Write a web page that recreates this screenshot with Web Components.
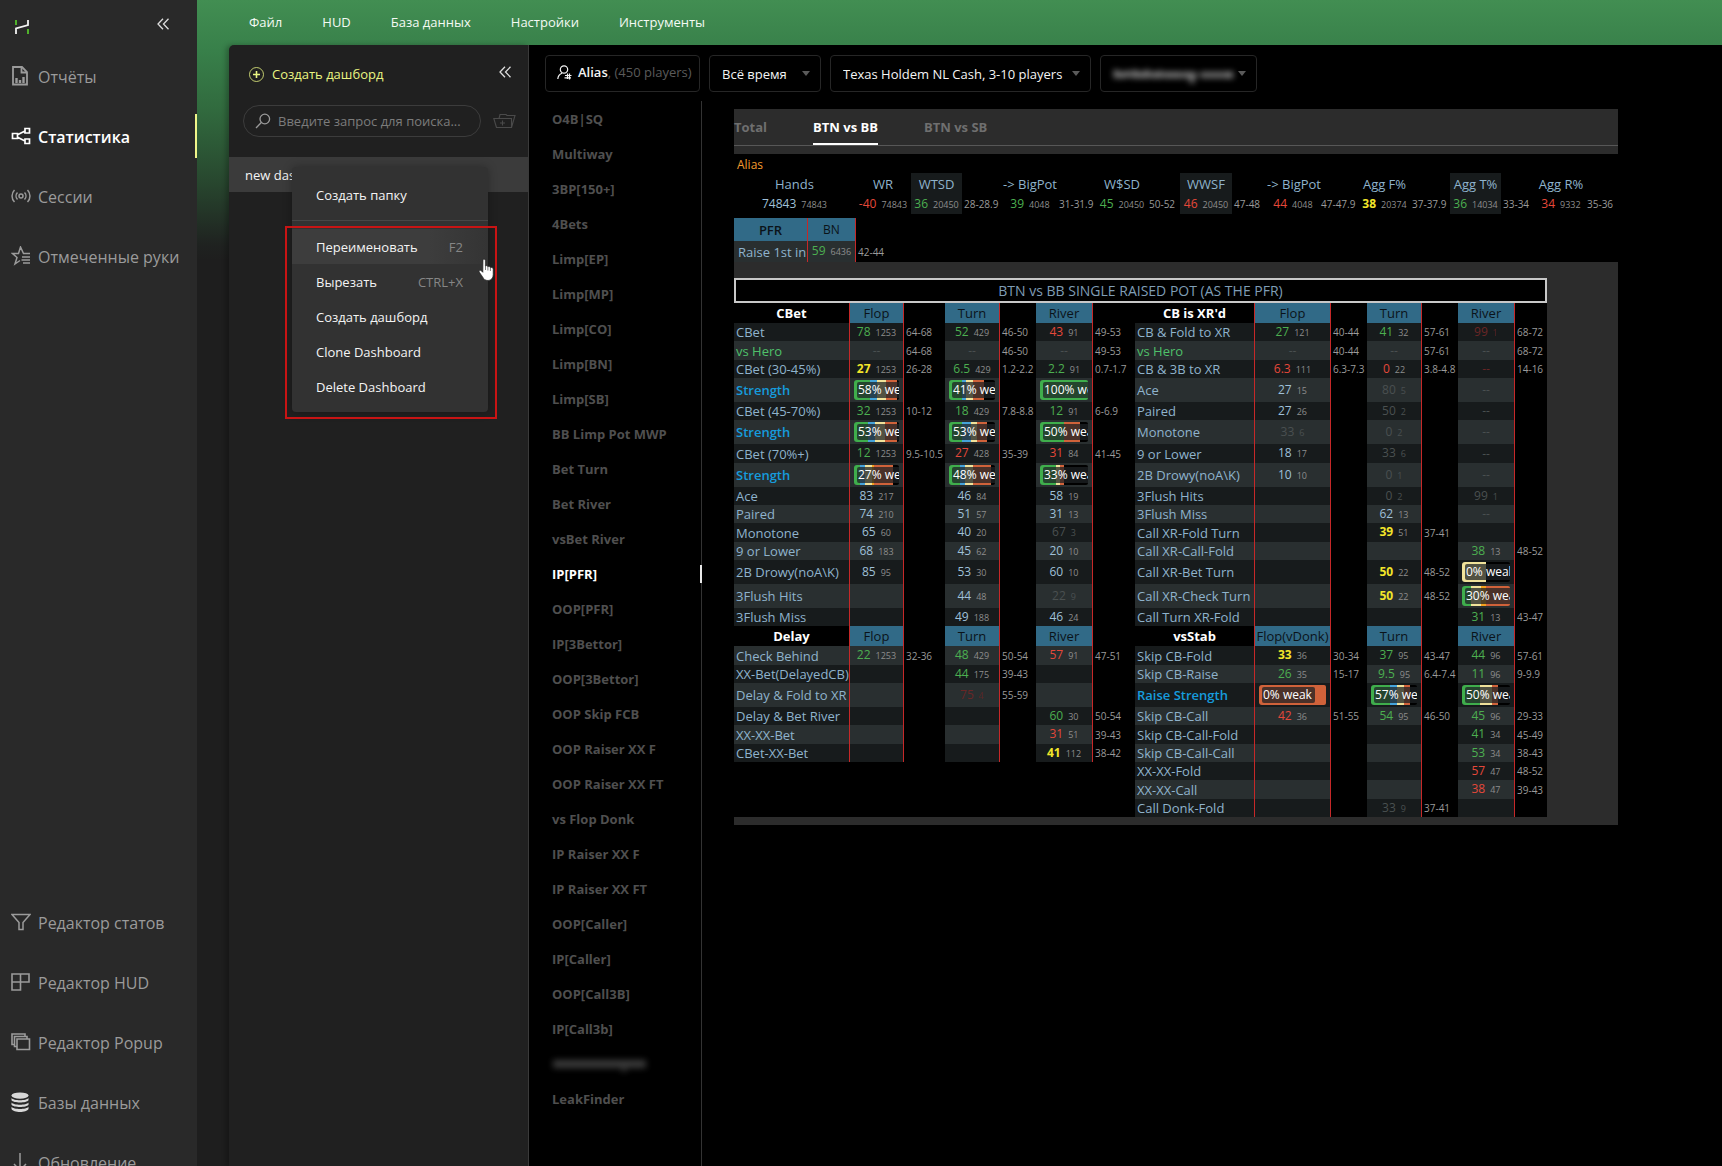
<!DOCTYPE html>
<html lang="ru">
<head>
<meta charset="utf-8">
<title>Статистика</title>
<style>
html,body{margin:0;height:100%;background:#000;overflow:hidden}
body{font-family:"Open Sans","Noto Sans",sans-serif;font-size:13px;color:#eee}
</style>
</head>
<body>
<hm-app></hm-app>
<script>
const base = `*{box-sizing:border-box}
button,input,select{font:inherit;color:inherit;background:none;border:0;padding:0;margin:0;text-align:left}
a{color:inherit;text-decoration:none}svg{display:block;flex:none}`;
const define = (name, html) => customElements.define(name, class extends HTMLElement {
  connectedCallback() {
    if (this.shadowRoot) return;
    const root = this.attachShadow({ mode: 'open' });
    root.innerHTML = `<style>${base}</style>` + (typeof html === 'function' ? html(this) : html);
  }
});
const svg = (w, h, body, attrs = '') => `<svg width="${w}" height="${h}" viewBox="0 0 ${w} ${h}" fill="none" stroke="currentColor" ${attrs}>${body}</svg>`;
const chevrons = svg(12, 12, '<path d="M6 .8 1 6l5 5.2M11.5.8l-5 5.2 5 5.2"/>', 'stroke-width="1.3"');
const icons = {
  report: svg(18, 20, '<path d="M2 1h9l5 5v12.500H2z"/><path d="M10.500 1v5.500H16"/><path d="M5.500 17v-5M9 17v-3M12.500 17v-6" stroke-width="2.400"/>', 'stroke-width="1.8"'),
  share: svg(20, 18, '<path d="M1.500 6.500h5v5h-5zM14 1.500h4.500V6H14zM14 12h4.500v4.500H14zM6.500 7.800 14 4M6.500 10.200 14 14"/>', 'stroke-width="1.7"'),
  live: svg(20, 14, '<circle cx="10" cy="7" r="2"/><path d="M6.500 3.500a5 5 0 0 0 0 7M13.500 3.500a5 5 0 0 1 0 7M3.500 1a8.500 8.500 0 0 0 0 12M16.500 1a8.500 8.500 0 0 1 0 12"/>', 'stroke-width="1.5"'),
  star: svg(20, 20, '<path d="M19 7.500h-6.500L9.500 1 7.500 7.500H1.500l4.500 4-2 6.500 5-3.500M11 11h8M10.500 14h8.500M12 17h7"/>', 'stroke-width="1.5"'),
  funnel: svg(20, 18, '<path d="M1 1.500h18L12 9.500v7H8v-7z"/>', 'stroke-width="1.5"'),
  grid: svg(20, 18, '<path d="M1 1h8.500v16H1zM1 9h17V1H9.500"/>', 'stroke-width="1.6"'),
  stack: svg(20, 18, '<path d="M6 6h12.500v10.500H6z"/><path d="M6 13.500H3.500V3.500H16V6M3.500 11.500H1V1h13v2.500"/>', 'stroke-width="1.6"'),
  db: svg(18, 21, '<ellipse cx="9" cy="3.600" rx="8.500" ry="3.200"/><path d="M.5 6c2 3 15 3 17 0v2.300c-2 3-15 3-17 0zM.5 10.400c2 3 15 3 17 0v2.300c-2 3-15 3-17 0zM.5 14.800c2 3 15 3 17 0v2.300c-2 4-15 4-17 0z"/>', 'style="fill:#d8d8d8;stroke:none"'),
  down: svg(18, 20, '<path d="M9 1v17M3 12l6 6.300 6-6.300"/>', 'stroke-width="1.5"')
};

define('hm-nav-item', el => `<style>
:host{display:block;position:relative;color:#9b9b9b;font-size:16px}
:host([active]){color:#fff;font-weight:600}
:host([active])::after{content:"";position:absolute;right:0;top:7px;height:44px;width:2px;background:#f0f58a}
a{display:flex;align-items:center;height:60px;padding-left:11px}
.i{width:27px;display:flex;align-items:center;padding-bottom:2px}
</style><a href="#"><span class="i">${icons[el.getAttribute('icon')]}</span><slot></slot></a>`);

define('hm-sidebar', `<style>
:host{display:block;flex:none;width:197px;height:100vh;overflow:hidden;background:#292929}
.in{display:flex;flex-direction:column;height:calc(100vh + 27px)}
.top{display:flex;justify-content:space-between;align-items:center;height:47px;padding:6px 28px 0 15px}
.top button{color:#ddd;margin-top:-5px}
.end{margin-top:auto}
</style><div class="in"><div class="top">
${svg(14, 14, '<path d="M1 0v5M13 14V9" stroke="#54c02c"/><path d="M1 14V8.500L13 5V0" stroke="#f2f2f2"/>', 'stroke-width="1.8"')}
<button aria-label="Свернуть меню">${chevrons}</button></div>
<nav>
<hm-nav-item icon="report">Отчёты</hm-nav-item>
<hm-nav-item icon="share" active>Статистика</hm-nav-item>
<hm-nav-item icon="live">Сессии</hm-nav-item>
<hm-nav-item icon="star">Отмеченные руки</hm-nav-item>
</nav>
<nav class="end">
<hm-nav-item icon="funnel">Редактор статов</hm-nav-item>
<hm-nav-item icon="grid">Редактор HUD</hm-nav-item>
<hm-nav-item icon="stack">Редактор Popup</hm-nav-item>
<hm-nav-item icon="db">Базы данных</hm-nav-item>
<hm-nav-item icon="down">Обновление</hm-nav-item>
</nav></div>`);

define('hm-menubar', `<style>
:host{display:block;flex:none}
nav{display:flex;align-items:center;gap:40px;height:45px;padding:0 0 2px 52px;font-weight:500;font-size:13px;color:#f4faf4}
</style><nav><a href="#">Файл</a><a href="#">HUD</a><a href="#">База данных</a><a href="#">Настройки</a><a href="#">Инструменты</a></nav>`);

define('hm-context-menu', `<style>
:host{display:block;width:196px;background:#323232;border-radius:4px;box-shadow:0 0 10px rgba(0,0,0,.3);font-weight:500;padding:8px 0 8px}
button{display:flex;justify-content:space-between;align-items:center;width:100%;height:35px;padding:0 25px 0 24px;color:#f4f4f4;white-space:nowrap}
button.first{height:39px}
kbd{font:inherit;font-weight:400;color:#868686}
hr{border:0;border-top:1px solid #474747;margin:6px 0 8px}
.on{background:linear-gradient(90deg,#3d3d3d 70%,#343434)}
.mark{position:absolute;left:-7px;top:59px;width:212px;height:193px;border:2px solid #c81414}
.cur{position:absolute;left:186px;top:91px}
</style><div role="menu">
<button role="menuitem" class="first">Создать папку</button><hr>
<button role="menuitem" class="on">Переименовать<kbd>F2</kbd></button>
<button role="menuitem">Вырезать<kbd>CTRL+X</kbd></button>
<button role="menuitem">Создать дашборд</button>
<button role="menuitem">Clone Dashboard</button>
<button role="menuitem">Delete Dashboard</button></div>
<div class="mark"></div>
<svg class="cur" width="17" height="24" viewBox="0 0 17 24"><path d="M5 1.500c1.300-.8 2.400 0 2.400 1.300V8c.8-.7 2.200-.4 2.500.8.900-.7 2.200-.3 2.500.9 1.200-.6 2.800 0 2.800 1.500v5.300c0 3.500-2 6-5.200 6-2.800 0-4.200-1.300-5.400-3.600L1.200 14c-.5-1.300.9-2.200 2-1.300l1.600 1.600z" fill="#fff" stroke="#222" stroke-width=".7"/><path d="M7.500 8v4M9.900 9v3.500M12.400 10v3" stroke="#444" stroke-width=".7"/></svg>`);

define('hm-dashboards', `<style>
:host{display:block;position:relative;flex:none;width:300px;background:#202020;border-right:1px solid #3a3a3a;border-radius:5px 0 0 0;box-shadow:-3px 0 5px rgba(0,0,0,.25)}
.head{display:flex;justify-content:space-between;align-items:center;height:60px;padding:0 17px 2px 20px}
.new{display:flex;align-items:center;gap:8px;color:#eaf582;font-weight:500}
.col{color:#ddd;margin-top:-5px}
.find{display:flex;align-items:center;gap:12px;padding:0 12px 0 14px}
label{display:flex;align-items:center;gap:7px;flex:1;height:32px;border:1px solid #3c3c3c;border-radius:16px;padding:0 4px 0 11px;color:#9a9a9a}
input{width:100%;min-width:0;outline:0;font-size:13px}
input::placeholder{color:#7c7c7c;opacity:1}
.find button{color:#4a4a4a}
.row{display:flex;align-items:center;height:35px;margin-top:20px;padding-left:16px;background:#3b3b3b;color:#f4f4f4;font-weight:500;font-size:13px}
hm-context-menu{position:absolute;left:63px;top:122px}
</style>
<div class="head"><button class="new">${svg(15, 15, '<circle cx="7.500" cy="7.500" r="7" stroke-width=".8"/><path d="M7.500 4v7M4 7.500h7" stroke-width="1.6"/>')}Создать дашборд</button>
<button class="col" aria-label="Свернуть">${chevrons}</button></div>
<div class="find"><label>${svg(16, 16, '<circle cx="9.800" cy="6" r="4.800"/><path d="M6.300 9.500 1 15"/>', 'stroke-width="1.3"')}<input type="text" aria-label="Поиск" placeholder="Введите запрос для поиска..."></label>
<button aria-label="Новая папка">${svg(23, 16, '<path d="M3.500 14.500.8 5.500h17.700v9zM6 5.500 7 1.500h6l1 1h8L18.500 14.500M9.500 7.500v5M7 10h5"/>', 'stroke-width="1.1"')}</button></div>
<div class="row">new das</div>
<hm-context-menu></hm-context-menu>`);

const arrow = svg(8, 5, '<path d="M0 0h8L4 5z"/>', 'style="fill:#5a5a5a;stroke:none"');
define('hm-filters', `<style>
:host{display:flex;gap:9px;padding:10px 16px 9px;font-size:13px;font-weight:500}
.box{display:flex;align-items:center;justify-content:space-between;height:37px;border:1px solid #262626;border-radius:4px;padding:0 10px 0 12px;color:#f4f4f4;white-space:nowrap}
.who{width:155px;justify-content:flex-start;gap:6px;padding:0 8px 3px 11px}
.who b{font-weight:600}
.who i{font-style:normal;font-weight:400;color:#5a5a5a}
.time{width:112px}.game{width:261px}.acc{width:157px}
select{appearance:none;outline:0;flex:1;min-width:0}
</style>
<button class="box who">${svg(15, 15, '<circle cx="7" cy="4.500" r="3.700"/><path d="M.8 14c.3-3.500 2-5 4.200-5.800M8 10.500h6.500M7.500 12.800H14M10.500 8.500v5.500M12.500 8.500v6"/>', 'stroke-width="1.2"')}<span><b>Alias</b><i>, (450 players)</i></span></button>
<div class="box time"><select aria-label="Период"><option>Всё время</option></select>${arrow}</div>
<div class="box game"><select aria-label="Игра"><option>Texas Holdem NL Cash, 3-10 players</option></select>${arrow}</div>
<button class="box acc" aria-label="Аккаунт">${svg(122, 20, '<path d="M3 6v8M9 8v6M15 7v6M22 6v8M28 8v6M34 6v8M41 8v6M47 7v7M54 8v6M60 8v6M66 8v6M73 8v6M79 8v11M92 8v6M99 8v6M106 8v6M113 8v6M118 8v6" stroke-width="4"/><path d="M2 11h118" stroke-width="4" opacity=".5"/>', 'style="filter:blur(3px);opacity:.65"')}${arrow}</button>`);

const cats = ['O4B|SQ','Multiway','3BP[150+]','4Bets','Limp[EP]','Limp[MP]','Limp[CO]','Limp[BN]','Limp[SB]','BB Limp Pot MWP','Bet Turn','Bet River','vsBet River','IP[PFR]','OOP[PFR]','IP[3Bettor]','OOP[3Bettor]','OOP Skip FCB','OOP Raiser XX F','OOP Raiser XX FT','vs Flop Donk','IP Raiser XX F','IP Raiser XX FT','OOP[Caller]','IP[Caller]','OOP[Call3B]','IP[Call3b]','','LeakFinder'];
define('hm-categories', `<style>
:host{display:block;flex:none;width:173px;border-right:1px solid #333;font-weight:700;font-size:13px;color:#4f4f4f}
a{display:flex;align-items:center;height:35px;padding-left:23px;position:relative}
.on{color:#fff}.on::after{content:"";position:absolute;right:-1px;top:9px;width:2px;height:18px;background:#e8e8e8}
</style><nav>${cats.map(c => `<a href="#"${c === 'IP[PFR]' ? ' class="on"' : ''}${c ? '' : ' aria-label="Дашборд"'}>${c || svg(96, 16, '<path d="M1 8h93" stroke-width="8"/><path d="M72 8v8" stroke-width="4"/>', 'style="filter:blur(3px);opacity:.75"')}</a>`).join('')}</nav>`);

/* Cell notation: colour letter + value + sample; "#text|stops" draws a strength bar. */
const cell = s => {
  if (s[0] === '#') {
    const [t, stops] = s.slice(1).split('|');
    const col = { g: '#3fae4c', b: '#45a3d9', y: '#f0e29a', o: '#d0623a', a: '#f2a01e', k: '#000' };
    let p = 0;
    const g = stops.split(',').map(x => { const a = p; p = +x.slice(1); return `${col[x[0]]} ${a}% ${p}%`; }).join(',');
    return `<div class="bar" style="background:linear-gradient(90deg,${g})"><span>${t}</span></div>`;
  }
  if (!s) return '';
  const [v, n] = s.slice(1).split(' ');
  return `<span class="v ${s[0]}">${v}${n ? `<small>${n}</small>` : ''}</span>`;
};
const tableCss = `table{border-collapse:separate;border-spacing:0;table-layout:fixed;background:#000}
td,th{padding:0;font-weight:400;text-align:center;white-space:nowrap;line-height:16px;font-size:12px}
.v{color:#9fc0d8;font-size:12px}.v small{font-size:9px;color:#8d8d8d;margin-left:5px}
.g{color:#4caf50}.r{color:#e5483a}.y{color:#f2e52a;font-weight:700}.y small{font-weight:400}
.d,.d small{color:#4a5050}.x,.x small{color:#6a2626}.x small{opacity:.8}
.rg{text-align:left;padding-left:2px;font-size:10px;color:#9a9a9a}
.l{border-left:1px solid #c62828}.e{border-right:1px solid #c62828}
.lab{text-align:left;padding-left:2px;color:#8fb3cc;font-size:13px}
.dk{background:#171b1c}.lt{background:#292f30}
.blue{background:#316a87;color:#0b1319;font-size:13px}`;

const top18 = [121,56,51,41,54,40,50,33,52,35,52,40,51,40,51,36,48,33];
const topH = ['Hands','WR','WTSD','','-> BigPot','','W$SD','','WWSF','','-> BigPot','','Agg F%','','Agg T%','','Agg R%',''];
const topV = ['v74843 74843','r-40 74843','g36 20450','28-28.9','g39 4048','31-31.9','g45 20450','50-52','r46 20450','47-48','r44 4048','47-47.9','y38 20374','37-37.9','g36 14034','33-34','r34 9332','35-36'];
const isR = i => i > 2 && i % 2 === 1;
const shade = i => [2, 8, 14].includes(i) ? 'dk' : '';
define('hm-summary', `<style>${tableCss}
:host{display:block;background:#000;height:108px}
.name{color:#f29a2e;font-size:12px;line-height:19px;height:19px;padding:1px 3px 0}
.sum th{color:#8fb3cc;font-size:13px}
.pfr{margin-top:4px}.pfr .first{font-weight:600}.pfr .lab{padding-left:4px}
</style><div class="name">Alias</div>
<table class="sum" style="width:884px"><colgroup>${top18.map(w => `<col style="width:${w}px">`).join('')}</colgroup>
<tr style="height:21px">${topH.map((h, i) => `<th class="${shade(i)}">${h.replace('>', '&gt;')}</th>`).join('')}</tr>
<tr style="height:20px">${topV.map((v, i) => isR(i) ? `<td class="rg">${v}</td>` : `<td class="${shade(i)}">${cell(v)}</td>`).join('')}</tr></table>
<table class="pfr" style="width:164px"><colgroup><col style="width:74px"><col style="width:48px"><col></colgroup>
<tr style="height:23px"><th class="blue e first">PFR</th><th class="blue e" style="font-size:12px">BN</th><td></td></tr>
<tr style="height:21px"><td class="lt lab e">Raise 1st in</td><td class="lt e">${cell('g59 6436')}</td><td class="rg">42-44</td></tr></table>`);

const H = (t, a = 'Flop') => ['H' + t, a, '', 'Turn', '', 'River', ''];
const rows = [
[20, H('CBet'), H("CB is XR'd")],
[18, ['kCBet','g78 1253','64-68','g52 429','46-50','r43 91','49-53'], ['kCB & Fold to XR','g27 121','40-44','g41 32','57-61','x99 1','68-72']],
[19, ['gvs Hero','d--','64-68','d--','46-50','d--','49-53'], ['gvs Hero','d--','40-44','d--','57-61','d--','68-72']],
[18, ['kCBet (30-45%)','y27 1253','26-28','g6.5 429','1.2-2.2','g2.2 91','0.7-1.7'], ['kCB & 3B to XR','r6.3 111','6.3-7.3','r0 22','3.8-4.8','x--','14-16']],
[24, ['sStrength','#58% we|g36,b51,y72,o95,k100','','#41% wea|g29,b36,y53,o77,k100','','#100% we|g100',''], ['kAce','v27 15','','d80 5','','d--','']],
[18, ['kCBet (45-70%)','g32 1253','10-12','g18 429','7.8-8.8','g12 91','6-6.9'], ['kPaired','v27 26','','d50 2','','d--','']],
[24, ['sStrength','#53% we|g32,b47,y69,o96,k100','','#53% wea|g29,b47,y61,o83,k100','','#50% wea|g50,o83,k100',''], ['kMonotone','d33 6','','d0 2','','d--','']],
[19, ['kCBet (70%+)','g12 1253','9.5-10.5','r27 428','35-39','r31 84','41-45'], ['k9 or Lower','v18 17','','d33 6','','d--','']],
[24, ['sStrength','#27% we|g13,b25,y40,a45,o87,k100','','#48% wea|g24,b35,y53,o92,k100','','#33% wea|g33,y42,o50,k100',''], ['k2B Drowy(noA\\K)','v10 10','','d0 1','','d--','']],
[18, ['kAce','v83 217','','v46 84','','v58 19',''], ['k3Flush Hits','','','d0 2','','d99 1','']],
[18, ['kPaired','v74 210','','v51 57','','v31 13',''], ['k3Flush Miss','','','v62 13','','d--','']],
[19, ['kMonotone','v65 60','','v40 20','','d67 3',''], ['kCall XR-Fold Turn','','','y39 51','37-41','','']],
[18, ['k9 or Lower','v68 183','','v45 62','','v20 10',''], ['kCall XR-Call-Fold','','','','','g38 13','48-52']],
[24, ['k2B Drowy(noA\\K)','v85 95','','v53 30','','v60 10',''], ['kCall XR-Bet Turn','','','y50 22','48-52','#0% weak|y50,k100','']],
[24, ['k3Flush Hits','','','v44 48','','d22 9',''], ['kCall XR-Check Turn','','','y50 22','48-52','#30% wea|g19,y39,a50,o100','']],
[18, ['k3Flush Miss','','','v49 188','','v46 24',''], ['kCall Turn XR-Fold','','','','','g31 13','43-47']],
[20, H('Delay'), H('vsStab', 'Flop(vDonk)')],
[19, ['kCheck Behind','g22 1253','32-36','g48 429','50-54','r57 91','47-51'], ['kSkip CB-Fold','y33 36','30-34','g37 95','43-47','g44 96','57-61']],
[18, ['kXX-Bet(DelayedCB)','','','g44 175','39-43','',''], ['kSkip CB-Raise','g26 35','15-17','g9.5 95','6.4-7.4','g11 96','9-9.9']],
[24, ['kDelay & Fold to XR','','','x75 4','55-59','',''], ['sRaise Strength','#0% weak|o100','','#57% we|g42,b57,y72,o85,k100','','#50% wea|g38,y63,o75,k100','']],
[18, ['kDelay & Bet River','','','','','g60 30','50-54'], ['kSkip CB-Call','r42 36','51-55','g54 95','46-50','g45 96','29-33']],
[19, ['kXX-XX-Bet','','','','','r31 51','39-43'], ['kSkip CB-Call-Fold','','','','','g41 34','45-49']],
[18, ['kCBet-XX-Bet','','','','','y41 112','38-42'], ['kSkip CB-Call-Call','','','','','g53 34','38-43']],
[18, null, ['kXX-XX-Fold','','','','','r57 47','48-52']],
[19, null, ['kXX-XX-Call','','','','','r38 47','39-43']],
[18, null, ['kCall Donk-Fold','','','d33 9','37-41','','']]
];
const half = (r, tone) => {
  if (!r) return '<td colspan="7"></td>';
  const edge = ['', 'l e', '', 'e', '', 'e', ''];
  const text = r[0].slice(1).replace('&', '&amp;');
  if (r[0][0] === 'H') return `<th class="ttl">${text}</th>` + r.slice(1).map((c, i) => c ? `<th class="blue ${edge[i + 1]}">${c}</th>` : '<td></td>').join('');
  return `<td class="lab ${tone} k${r[0][0]}">${text}</td>` + r.slice(1).map((c, i) => i % 2 ? `<td class="rg">${c}</td>` : `<td class="${tone} ${edge[i + 1]}">${cell(c)}</td>`).join('');
};
define('hm-stat-table', `<style>${tableCss}
:host{display:block;width:813px}
h2{margin:0;height:25px;border:2px solid #c8c8c8;background:#000;color:#7f9db5;font-size:14px;line-height:21px;font-weight:500;text-align:center}
.ttl{font-weight:700;color:#fff;font-size:13px}
.kg{color:#4fc06a}.ks{color:#169bdc;font-weight:600}
.bar{height:20px;margin:0 4px;border-radius:3px 2px 2px 3px;padding:2px 0 2px 3px;overflow:hidden;text-align:left}
.bar span{display:inline-block;vertical-align:top;height:16px;line-height:16px;padding:0 3px 0 1px;border-radius:2px;background:rgba(30,34,36,.75);color:#fff;font-size:12px;font-weight:500}
</style><h2>BTN vs BB SINGLE RAISED POT (AS THE PFR)</h2>
<table style="width:813px"><colgroup>${[115,55,41,55,36,57,42,119,77,36,55,36,57,32].map(w => `<col style="width:${w}px">`).join('')}</colgroup>
${rows.map(([h, a, b], i) => `<tr style="height:${h}px">${half(a, (i % 2) ^ (i > 16) ? 'dk' : 'lt')}${half(b, i % 2 ? 'dk' : 'lt')}</tr>`).join('')}</table>`);

define('hm-sheet', `<style>
:host{display:block;flex:0 1 884px;margin:8px 0 0 32px;background:#2c2c2c;align-self:flex-start;padding-bottom:8px}
nav{display:flex;gap:46px;height:37px;border-bottom:1px solid #575757;margin-bottom:8px;font-weight:700;color:#6f6f6f}
a{line-height:36px;height:36px}
.on{color:#fff;border-bottom:2px solid #fff}
hm-stat-table{margin-top:16px}
</style><nav><a href="#">Total</a><a href="#" class="on">BTN vs BB</a><a href="#">BTN vs SB</a></nav>
<hm-summary></hm-summary><hm-stat-table></hm-stat-table>`);

define('hm-app', `<style>
:host{display:flex;height:100vh;overflow:hidden}
.r{flex:1;min-width:0;display:flex;flex-direction:column;background:linear-gradient(180deg,#428e52 0,#38804a 50px,#316a3e 110px,#28482f 180px,#1f2220 245px,#1e1e1e 260px)}
.b{flex:1;display:flex;min-height:0;padding-left:32px}
main{flex:1;min-width:0;background:#000;display:flex;flex-direction:column}
.c{display:flex;flex:1;min-height:0}
</style><hm-sidebar></hm-sidebar><div class="r"><hm-menubar></hm-menubar><div class="b"><hm-dashboards></hm-dashboards>
<main><hm-filters></hm-filters><div class="c"><hm-categories></hm-categories><hm-sheet></hm-sheet></div></main></div></div>`);
</script>
</body>
</html>
